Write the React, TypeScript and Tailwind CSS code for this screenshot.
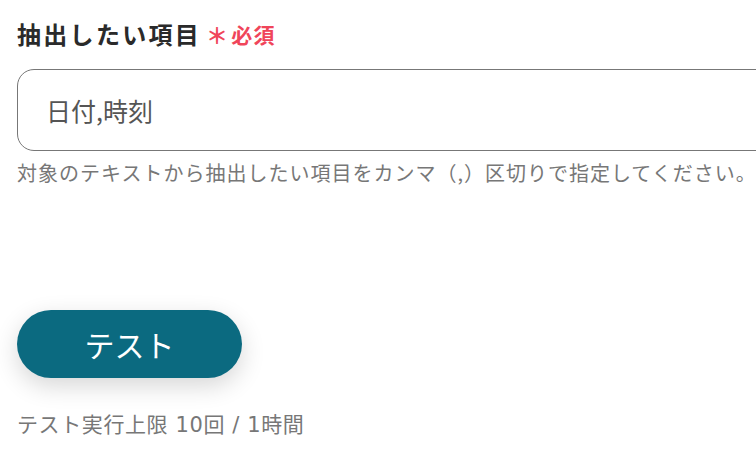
export default function App() {
  return (
    <div className="w-[756px] h-[455px] bg-white overflow-hidden" style={{ fontFamily: '"Noto Sans CJK JP", "Noto Sans", sans-serif' }}>
      <div className="pl-[17px] pt-[19px]">
        <div className="flex items-center h-[30px]">
          <span className="text-[24px] font-bold text-[#2a2a2a] tracking-[2.3px] leading-none">抽出したい項目</span>
          <span className="ml-[5px] text-[22px] font-bold text-[#f0455a] leading-none">＊</span>
          <span className="ml-[3px] text-[21px] font-bold text-[#f0455a] tracking-[1.5px] leading-none">必須</span>
        </div>
        <div className="mt-[20px] w-[800px] h-[82px] border border-[#777] rounded-[17px] flex items-center pl-[28px]">
          <span className="text-[25px] text-[#555] leading-none">日付,時刻</span>
        </div>
        <div className="mt-[12px] text-[20px] text-[#777] tracking-[1px] whitespace-nowrap leading-none">
          対象のテキストから抽出したい項目をカンマ（,）区切りで指定してください。
        </div>
        <button className="mt-[127px] w-[225px] h-[68px] rounded-full bg-[#0b6a80] text-white text-[30px] shadow-[0_8px_24px_rgba(0,0,0,0.16)] flex items-center justify-center leading-none">
          テスト
        </button>
        <div className="mt-[37px] text-[21px] text-[#777] tracking-[0.6px] whitespace-nowrap leading-none" style={{ fontFamily: '"DejaVu Sans", "Noto Sans CJK JP", sans-serif' }}>
          テスト実行上限 10回 / 1時間
        </div>
      </div>
    </div>
  );
}
